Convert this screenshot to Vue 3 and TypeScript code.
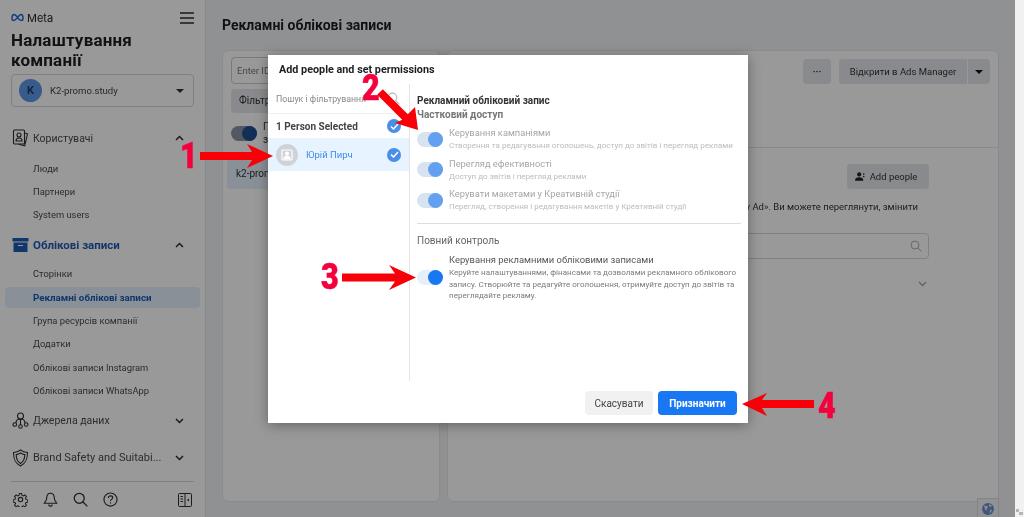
<script setup lang="ts">
// Sidebar sections, in page order
const usersLinks = ['Люди', 'Партнери', 'System users']
const accountLinks = [
  'Сторінки',
  'Рекламні облікові записи',
  'Група ресурсів компанії',
  'Додатки',
  'Облікові записи Instagram',
  'Облікові записи WhatsApp',
]
const ACTIVE_LINK = 'Рекламні облікові записи'

const partialPerms = [
  {
    title: 'Керування кампаніями',
    desc: 'Створення та редагування оголошень, доступ до звітів і перегляд реклами',
  },
  { title: 'Перегляд ефективності', desc: 'Доступ до звітів і перегляд реклами' },
  {
    title: 'Керувати макетами у Креативній студії',
    desc: 'Перегляд, створення і редагування макетів у Креативній студії',
  },
]
</script>

<template>
  <div class="page">
    <aside class="sidebar">
      <div class="brand-row">
        <div class="brand">
          <svg width="13" height="9" viewBox="0 0 26 16" fill="none" stroke="#1f6fd6" stroke-width="3">
            <path d="M13 8C10 3 8 2 6 2 3 2 2 5 2 9c0 3 1 5 3 5 3 0 5-3 8-6 3-4 5-6 7-6 3 0 4 3 4 7 0 3-1 5-3 5-3 0-5-3-8-6z" />
          </svg>
          <span>Meta</span>
        </div>
        <svg class="burger" width="14" height="12" viewBox="0 0 14 12" stroke="#2c2c2c" stroke-width="1.300">
          <path d="M0 1h14M0 6h14M0 11h14" />
        </svg>
      </div>
      <h1 class="company-title">Налаштування компанії</h1>
      <div class="company-select">
        <span class="avatar">K</span>
        <span class="company-name">K2-promo.study</span>
        <span class="caret"></span>
      </div>

      <nav class="nav">
        <div class="nav-head users-head">
          <svg width="16" height="18" viewBox="0 0 16 18" fill="none" stroke="#2e2e2e" stroke-width="1.100">
            <rect x="1" y="1" width="11" height="14" rx="1" />
            <path d="M12 4l3 .8-2.800 12-6-1.500" />
            <circle cx="6.500" cy="6" r="2" />
            <path d="M3.500 12c0-2 1.500-3 3-3s3 1 3 3z" />
          </svg>
          <span>Користувачі</span>
          <svg class="chev" width="9" height="6" viewBox="0 0 9 6" fill="none" stroke="#2c2c2c" stroke-width="1.500"><path d="M1 5l3.500-3.500L8 5" /></svg>
        </div>
        <a v-for="link in usersLinks" :key="link" class="nav-link">{{ link }}</a>

        <div class="nav-head accounts-head">
          <svg width="16" height="14" viewBox="0 0 16 14" fill="#1d5bb5">
            <rect width="16" height="3.500" />
            <path d="M1 4.500h14V14H1zM5.500 7v1h5V7z" fill-rule="evenodd" />
          </svg>
          <span>Облікові записи</span>
          <svg class="chev" width="9" height="6" viewBox="0 0 9 6" fill="none" stroke="#2c2c2c" stroke-width="1.500"><path d="M1 5l3.500-3.500L8 5" /></svg>
        </div>
        <a
          v-for="link in accountLinks"
          :key="link"
          class="nav-link"
          :class="{ active: link === ACTIVE_LINK }"
        >{{ link }}</a>

        <div class="nav-head sources-head">
          <svg width="17" height="17" viewBox="0 0 17 17" fill="none" stroke="#2e2e2e" stroke-width="1.100">
            <circle cx="8.500" cy="4" r="3" />
            <path d="M4 11c0-2.500 2-4 4.500-4S13 8.500 13 11M8.500 7v6" />
            <circle cx="2.800" cy="12.500" r="1.800" />
            <circle cx="8.500" cy="14.500" r="1.800" />
            <circle cx="14.200" cy="12.500" r="1.800" />
          </svg>
          <span>Джерела даних</span>
          <svg class="chev" width="9" height="6" viewBox="0 0 9 6" fill="none" stroke="#2c2c2c" stroke-width="1.500"><path d="M1 1l3.500 3.500L8 1" /></svg>
        </div>
        <div class="nav-head safety-head">
          <svg width="17" height="18" viewBox="0 0 17 18" fill="none" stroke="#2e2e2e" stroke-width="1.100">
            <path d="M8.500 1c2 1.500 4.500 2.300 7 2.500 0 6-1 10.500-7 13.500-6-3-7-7.500-7-13.500 2.500-.2 5-1 7-2.500z" />
            <path d="M8.500 4c1.300.9 2.800 1.400 4.300 1.600 0 4-.7 6.900-4.300 8.900-3.600-2-4.300-4.900-4.300-8.900C5.700 5.400 7.200 4.900 8.500 4z" />
          </svg>
          <span class="safety-label">Brand Safety and Suitabi...</span>
          <svg class="chev" width="9" height="6" viewBox="0 0 9 6" fill="none" stroke="#2c2c2c" stroke-width="1.500"><path d="M1 1l3.500 3.500L8 1" /></svg>
        </div>
      </nav>

      <div class="side-footer">
        <svg width="15" height="15" viewBox="0 0 24 24" fill="none" stroke="#2e2e2e" stroke-width="1.800">
          <circle cx="12" cy="12" r="3.500" />
          <path d="M10 1.500h4l.7 3.200 2.300 1 2.800-1.800 2.800 2.800-1.800 2.800 1 2.300 3.200.7v4l-3.200.7-1 2.300 1.800 2.800-2.800 2.800-2.800-1.800-2.300 1-.7 3.200h-4l-.7-3.200-2.300-1-2.800 1.800-2.800-2.800 1.800-2.800-1-2.300-3.200-.7v-4l3.200-.7 1-2.300-1.800-2.800 2.800-2.800 2.800 1.800 2.300-1z" transform="translate(1.200 1.200) scale(.9)" />
        </svg>
        <svg width="15" height="15" viewBox="0 0 24 24" fill="none" stroke="#2e2e2e" stroke-width="1.800">
          <path d="M12 2c-4 0-6 3-6 7 0 5-3 7-4 9h20c-1-2-4-4-4-9 0-4-2-7-6-7zM9 20c.5 2 1.500 2.800 3 2.800s2.500-.8 3-2.800" />
        </svg>
        <svg width="15" height="15" viewBox="0 0 24 24" fill="none" stroke="#2e2e2e" stroke-width="2">
          <circle cx="10" cy="10" r="8" />
          <path d="M16 16l7 7" />
        </svg>
        <svg width="15" height="15" viewBox="0 0 24 24" fill="none" stroke="#2e2e2e" stroke-width="1.800">
          <circle cx="12" cy="12" r="10.500" />
          <path d="M8.500 9.500c0-2 1.500-3.300 3.500-3.300s3.500 1.300 3.500 3c0 2.800-3.500 2.500-3.500 5.300M12 16.500v2" />
        </svg>
        <svg class="panel-icon" width="14" height="14" viewBox="0 0 14 14" fill="none" stroke="#2e2e2e" stroke-width="1">
          <rect x=".5" y=".5" width="13" height="13" rx="1" />
          <path d="M7 .5v13M2.500 3.500h2.500M2.500 6h2.500M2.500 8.500h2.500" />
          <path d="M11 5.500v3l-2-1.500z" fill="#2e2e2e" stroke="none" />
        </svg>
      </div>
    </aside>

    <main class="content">
      <h2 class="page-title">Рекламні облікові записи</h2>
      <div class="columns">
        <section class="card list-card">
          <div class="id-input">Enter ID</div>
          <div class="filter-btn">Фільтр</div>
          <div class="list-toggle-row">
            <span class="toggle dark-toggle"><i></i></span>
            <span class="list-toggle-text">Показати<br />за</span>
          </div>
          <div class="list-item">k2-promo</div>
        </section>

        <section class="card detail-card">
          <div class="detail-head">
            <span class="grey-btn more-btn">···</span>
            <div class="split-btn">
              <span class="grey-btn open-btn">Відкрити в Ads Manager</span>
              <span class="grey-btn open-caret"><span class="caret dark"></span></span>
            </div>
          </div>
          <div class="detail-body">
            <div class="add-row">
              <span class="grey-btn add-btn">
                <svg width="10" height="9" viewBox="0 0 12 10" fill="#222">
                  <circle cx="5" cy="2.500" r="2.500" />
                  <path d="M0 10c0-3 2-4 5-4s5 1 5 4z" />
                  <circle cx="10.500" cy="2" r="1" />
                  <circle cx="10.500" cy="5" r="1" />
                </svg>
                Add people
              </span>
            </div>
            <p class="detail-text">у My Ad». Ви можете переглянути, змінити</p>
            <div class="detail-search">
              <svg width="12" height="12" viewBox="0 0 24 24" fill="none" stroke="#aeaeae" stroke-width="2"><circle cx="10" cy="10" r="8" /><path d="M16 16l7 7" /></svg>
            </div>
            <div class="detail-chev">
              <svg width="9" height="6" viewBox="0 0 9 6" fill="none" stroke="#a5a5a5" stroke-width="1.300"><path d="M1 1l3.500 3.500L8 1" /></svg>
            </div>
          </div>
          <span class="globe-box">
            <svg width="12" height="12" viewBox="0 0 12 12">
              <circle cx="6" cy="6" r="6" fill="#6e8fd0" />
              <path d="M2 2.500l3 .5 1 1.500-1.500 1.500.5 2-2-1.500zM7 1l3 1.500-1 1.500-2-.5zM8 7l2-.5-1 3-1.500.5z" fill="#dfe6f5" />
            </svg>
          </span>
        </section>
      </div>
    </main>
    <div class="scroll-strip">
      <svg width="7" height="6" viewBox="0 0 7 6" fill="#b5b5b5"><path d="M0 0h3v3H0zM3 3h4v3H3z" /></svg>
    </div>

    <div class="overlay"></div>

    <div class="modal">
      <h3 class="modal-title">Add people and set permissions</h3>
      <div class="modal-body">
        <div class="people-col">
          <div class="people-search">
            <span>Пошук і фільтрування</span>
            <svg width="13" height="13" viewBox="0 0 24 24" fill="none" stroke="#b5b5b5" stroke-width="2"><circle cx="10" cy="10" r="8" /><path d="M16 16l7 7" /></svg>
          </div>
          <div class="people-count">
            <span>1 Person Selected</span>
            <span class="check"><svg width="9" height="7" viewBox="0 0 9 7" fill="none" stroke="#fff" stroke-width="1.500"><path d="M1 3.500L3.500 6 8 1" /></svg></span>
          </div>
          <div class="person">
            <span class="person-avatar">
              <svg width="12" height="12" viewBox="0 0 12 12" fill="none" stroke="#fff" stroke-width="1.200">
                <rect x="1" y="1" width="10" height="10" rx="1" />
                <circle cx="6" cy="4.500" r="1.500" fill="#fff" />
                <path d="M3 10c0-2 1-3 3-3s3 1 3 3z" fill="#fff" />
              </svg>
            </span>
            <span class="person-name">Юрій Пирч</span>
            <span class="check"><svg width="9" height="7" viewBox="0 0 9 7" fill="none" stroke="#fff" stroke-width="1.500"><path d="M1 3.500L3.500 6 8 1" /></svg></span>
          </div>
        </div>

        <div class="perm-col">
          <div class="perm-heading">Рекламний обліковий запис</div>
          <div class="perm-sub">Частковий доступ</div>
          <div class="partial-list">
            <div v-for="perm in partialPerms" :key="perm.title" class="perm-row">
              <span class="toggle muted"><i></i></span>
              <div>
                <div class="perm-title">{{ perm.title }}</div>
                <div class="perm-desc">{{ perm.desc }}</div>
              </div>
            </div>
          </div>
          <div class="perm-divider"></div>
          <div class="full-heading">Повний контроль</div>
          <div class="perm-row full-row">
            <span class="toggle"><i></i></span>
            <div>
              <div class="perm-title strong">Керування рекламними обліковими записами</div>
              <div class="perm-desc strong">Керуйте налаштуваннями, фінансами та дозволами рекламного облікового запису. Створюйте та редагуйте оголошення, отримуйте доступ до звітів та переглядайте рекламу.</div>
            </div>
          </div>
        </div>
      </div>
      <div class="modal-footer">
        <button class="btn-cancel">Скасувати</button>
        <button class="btn-assign">Призначити</button>
      </div>
    </div>

    <!-- red annotations drawn over the screenshot -->
    <svg class="arrows" width="1024" height="517" viewBox="0 0 1024 517" fill="#f80008">
      <path d="M200 152h52l-5-8 26 12-26 12 5-8h-52z" />
      <path d="M382.800 89.200l25 25 7.200-7.200 3 23-23-7 7.200-3.200-25-25z" />
      <path d="M342 273.500h53l-6-8.500 27 12.500L389 290l6-8.500h-53z" />
      <path d="M814 400h-52l5-7-25 11 25 12-5-8h52z" />
    </svg>
    <span class="mark mark-1">1</span>
    <span class="mark mark-2">2</span>
    <span class="mark mark-3">3</span>
    <span class="mark mark-4">4</span>
  </div>
</template>

<style>
html,
body {
  margin: 0;
  background: #8f8f8f;
}
</style>

<style scoped>
.page {
  position: relative;
  display: flex;
  width: 1024px;
  height: 517px;
  overflow: hidden;
  font-family: Roboto, "Liberation Sans", sans-serif;
  color: #333;
  background: #f1f1f1;
  /* the source capture is slightly soft */
  filter: blur(0.4px);
}

/* --- sidebar --- */
.sidebar {
  box-sizing: border-box;
  width: 206px;
  flex: none;
  display: flex;
  flex-direction: column;
  padding: 10px 5px 0;
  background: #fff;
  border-right: 1px solid #e4e4e4;
}
.brand-row {
  display: flex;
  justify-content: space-between;
  align-items: center;
  padding: 0 6px;
  height: 15px;
}
.brand {
  display: flex;
  align-items: center;
  gap: 3px;
  font-family: Inter, sans-serif;
  font-size: 11px;
  color: #1c1e21;
}
.company-title {
  margin: 5px 0 0 6px;
  width: 160px;
  font-size: 17px;
  line-height: 20px;
  font-weight: 700;
  letter-spacing: 0.2px;
  color: #1c1e21;
}
.company-select {
  display: flex;
  align-items: center;
  box-sizing: border-box;
  height: 33px;
  margin: 4px 6px 0;
  padding: 0 9px 0 7px;
  border: 1px solid #d6d6d6;
  border-radius: 4px;
}
.avatar {
  width: 23px;
  height: 23px;
  border-radius: 50%;
  background: #5e98e8;
  color: #1c3c70;
  font-size: 11px;
  font-weight: 700;
  line-height: 23px;
  text-align: center;
}
.company-name {
  margin-left: 8px;
  flex: 1;
  font-size: 9.600px;
  color: #444;
}
.caret {
  width: 0;
  height: 0;
  border-left: 4px solid transparent;
  border-right: 4px solid transparent;
  border-top: 4px solid #333;
}
.nav {
  display: flex;
  flex-direction: column;
  margin-top: 21px;
  flex: 1;
}
.nav-head {
  display: flex;
  align-items: center;
  height: 20px;
  padding: 0 16px 0 6px;
  font-size: 10.500px;
  color: #4a4a4a;
}
.nav-head svg:first-child {
  width: 19px;
  flex: none;
}
.nav-head span {
  margin-left: 3px;
  flex: 1;
  white-space: nowrap;
}
.nav-head .safety-label {
  font-size: 11px;
}
.accounts-head {
  margin-top: 7px;
  font-size: 11.500px;
  font-weight: 700;
  color: #1d5bb5;
}
.users-head {
  margin-bottom: 9.500px;
}
.sources-head {
  margin-top: 7px;
}
.safety-head {
  margin-top: 17px;
}
.nav-link {
  display: block;
  height: 21px;
  margin: 0 0 2.400px 0;
  padding-left: 28px;
  border-radius: 4px;
  font-size: 9.400px;
  line-height: 21px;
  color: #4a4a4a;
  white-space: nowrap;
}
.accounts-head + .nav-link {
  margin-top: 8.500px;
}
.nav-link.active {
  background: #e6f0fc;
  color: #1d5bb5;
  font-size: 9.800px;
  font-weight: 700;
}
.side-footer {
  display: flex;
  align-items: center;
  gap: 15px;
  height: 35px;
  margin: 0 6px;
  padding: 0 2px;
  border-top: 1px solid #d9d9d9;
}
.panel-icon {
  margin-left: auto;
}

/* --- page behind the dialog --- */
.content {
  flex: 1;
  min-width: 0;
  padding: 0 16px 0 16px;
  background: #f0f2f5;
}
.page-title {
  margin: 17px 0 0;
  font-size: 14px;
  line-height: 17px;
  font-weight: 700;
  color: #1c1e21;
}
.columns {
  display: flex;
  gap: 7px;
  margin-top: 16px;
}
.card {
  box-sizing: border-box;
  height: 452px;
  background: #fff;
  border-radius: 6px;
  border: 1px solid #e8e8e8;
}
.list-card {
  width: 218px;
  flex: none;
  padding: 6px 8px;
}
.id-input {
  height: 25px;
  padding-left: 5px;
  border: 1px solid #ccc;
  border-radius: 4px;
  font-size: 9.500px;
  line-height: 25px;
  color: #777;
}
.filter-btn {
  width: 90px;
  height: 24px;
  margin-top: 5px;
  padding-left: 8px;
  background: #e4e6eb;
  border-radius: 4px;
  font-size: 10px;
  line-height: 24px;
}
.list-toggle-row {
  display: flex;
  gap: 6px;
  margin-top: 7px;
  font-size: 10px;
  line-height: 13px;
}
.dark-toggle {
  margin-top: 6px;
}
.list-item {
  height: 30px;
  margin: 13px -4px 0;
  padding-left: 9px;
  background: #e6f0fc;
  border-radius: 4px;
  font-size: 10px;
  line-height: 30px;
}
.detail-card {
  position: relative;
  flex: 1;
  min-width: 0;
}
.detail-head {
  display: flex;
  justify-content: flex-end;
  gap: 8px;
  height: 97px;
  box-sizing: border-box;
  padding: 8px 8px 0 0;
  border-bottom: 1px solid #e3e3e3;
}
.grey-btn {
  display: inline-flex;
  align-items: center;
  justify-content: center;
  height: 25px;
  background: #e4e6eb;
  border-radius: 4px;
  font-size: 9.500px;
  color: #333;
}
.more-btn {
  width: 28px;
  font-weight: 700;
}
.split-btn {
  display: flex;
  gap: 1px;
}
.open-btn {
  width: 128px;
  border-radius: 4px 0 0 4px;
}
.open-caret {
  width: 22px;
  border-radius: 0 4px 4px 0;
}
.caret.dark {
  border-top-color: #111;
}
.detail-body {
  padding: 16px 69px 0 0;
}
.add-row {
  display: flex;
  justify-content: flex-end;
}
.add-btn {
  width: 82px;
  gap: 5px;
  padding-right: 4px;
  box-sizing: border-box;
}
.detail-text {
  margin: 11px 11px 0 0;
  font-size: 9.500px;
  line-height: 14px;
  text-align: right;
  color: #333;
}
.detail-search {
  display: flex;
  justify-content: flex-end;
  align-items: center;
  height: 24px;
  margin: 19px 0 0 0;
  padding-right: 6px;
  border: 1px solid #d8d8d8;
  border-radius: 4px;
}
.detail-chev {
  display: flex;
  justify-content: flex-end;
  margin-top: 22px;
  padding-right: 2px;
}
.globe-box {
  position: absolute;
  right: -1px;
  bottom: -18px;
  display: flex;
  align-items: center;
  justify-content: center;
  width: 20px;
  height: 19px;
  background: #f2f3f5;
  border: 1px solid #ddd;
}
.scroll-strip {
  display: flex;
  align-items: flex-end;
  justify-content: flex-end;
  box-sizing: border-box;
  width: 9px;
  flex: none;
  padding: 0 1px 2px 0;
  background: #f1f1f1;
}

/* --- dim layer, stops at the scrollbar strip --- */
.overlay {
  position: absolute;
  inset: 0 9px 0 0;
  background: rgba(0, 0, 0, 0.4);
}

/* --- dialog --- */
.modal {
  position: absolute;
  left: 268px;
  top: 55px;
  display: flex;
  flex-direction: column;
  box-sizing: border-box;
  width: 480px;
  height: 368px;
  background: #fff;
  box-shadow: 0 2px 12px rgba(0, 0, 0, 0.35);
}
.modal-title {
  margin: 0;
  padding: 8px 11px 0;
  height: 29px;
  box-sizing: border-box;
  font-size: 10.800px;
  line-height: 14px;
  font-weight: 700;
  color: #1c1e21;
}
.modal-body {
  display: flex;
  height: 297px;
}
.people-col {
  box-sizing: border-box;
  width: 142px;
  flex: none;
  border-right: 1px solid #e4e4e4;
}
.people-search {
  display: flex;
  justify-content: space-between;
  align-items: center;
  box-sizing: border-box;
  height: 30px;
  padding: 0 9px 0 8px;
  font-size: 8.800px;
  color: #8a8a8a;
  border-bottom: 1px solid #eee;
}
.people-count {
  display: flex;
  justify-content: space-between;
  align-items: center;
  height: 24px;
  padding: 0 8px;
  font-size: 10px;
  font-weight: 700;
  color: #444;
}
.check {
  display: flex;
  align-items: center;
  justify-content: center;
  width: 14px;
  height: 14px;
  border-radius: 50%;
  background: #4a8ee8;
}
.person {
  display: flex;
  align-items: center;
  height: 33px;
  padding: 0 8px;
  background: #e7f3ff;
}
.person-avatar {
  display: flex;
  align-items: center;
  justify-content: center;
  width: 22px;
  height: 22px;
  border-radius: 50%;
  background: #ced3d9;
}
.person-name {
  flex: 1;
  margin-left: 8px;
  font-size: 9.500px;
  color: #3f8bea;
}
.perm-col {
  flex: 1;
  min-width: 0;
  padding: 10px 7px 0;
}
.perm-heading {
  font-size: 10px;
  line-height: 14px;
  font-weight: 700;
  color: #333;
}
.perm-sub {
  font-size: 10px;
  line-height: 14px;
  font-weight: 700;
  color: #777;
}
.partial-list {
  display: flex;
  flex-direction: column;
  gap: 6px;
  margin-top: 5px;
}
.perm-row {
  display: flex;
  align-items: center;
  gap: 6px;
}
.toggle {
  position: relative;
  flex: none;
  display: block;
  width: 26px;
  height: 15px;
  border-radius: 8px;
  background: #e7f0fa;
}
.toggle i {
  position: absolute;
  right: 0;
  top: 0;
  width: 15px;
  height: 15px;
  border-radius: 50%;
  background: #1877f2;
}
.dark-toggle {
  background: #8b95a3;
}
.dark-toggle i {
  background: #1d4f91;
}
.toggle.muted {
  background: #d8e3f0;
}
.toggle.muted i {
  background: #64a0f0;
}
.perm-title {
  font-size: 9.300px;
  line-height: 12px;
  color: #a6a6a6;
}
.perm-desc {
  margin-top: 1px;
  font-size: 8.050px;
  line-height: 11.500px;
  color: #bcbcbc;
  white-space: nowrap;
}
.perm-title.strong {
  font-size: 9.400px;
  color: #555;
}
.perm-desc.strong {
  color: #7b7b7b;
  white-space: normal;
}
.perm-divider {
  height: 1px;
  margin: 10.500px 0 0;
  background: #dedede;
}
.full-heading {
  margin-top: 10px;
  font-size: 10px;
  line-height: 14px;
  color: #666;
}
.full-row {
  margin-top: 6px;
}
.modal-footer {
  display: flex;
  justify-content: flex-end;
  align-items: center;
  gap: 5px;
  flex: 1;
  padding: 2px 11px 0 0;
}
.modal-footer button {
  height: 24px;
  border: 0;
  border-radius: 4px;
  font: 10px Roboto, sans-serif;
}
.btn-cancel {
  width: 68px;
  background: #f1f1f1;
  color: #444;
}
.modal-footer .btn-assign {
  width: 79px;
  background: #1877f2;
  color: #fff;
  font-weight: 700;
}

/* --- annotations --- */
.arrows {
  position: absolute;
  left: 0;
  top: 0;
}
.mark {
  position: absolute;
  font-family: Roboto, "Liberation Sans", sans-serif;
  font-size: 36px;
  line-height: 36px;
  font-weight: 900;
  color: #f5003c;
  -webkit-text-stroke: 0.5px #f5003c;
  transform: scaleX(0.85);
  transform-origin: left top;
}
.mark-1 {
  left: 180px;
  top: 138px;
}
.mark-2 {
  left: 362px;
  top: 70px;
}
.mark-3 {
  left: 321px;
  top: 259px;
}
.mark-4 {
  left: 818px;
  top: 388px;
}
</style>
